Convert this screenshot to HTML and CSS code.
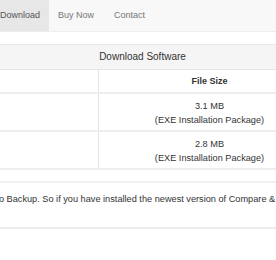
FILE: index.html
```html
<!DOCTYPE html>
<html>
<head>
<meta charset="utf-8">
<link rel="stylesheet" href="styles.css">
</head>
<body>
<div class="page">
  <nav class="navbar">
    <ul class="nav">
      <li class="active"><a href="#">Download</a></li>
      <li><a href="#">Buy Now</a></li>
      <li><a href="#">Contact</a></li>
    </ul>
  </nav>
  <div class="panel">
    <div class="panel-heading">Download Software</div>
    <table class="dl-table">
      <thead>
        <tr><th class="col-name"></th><th class="col-size">File Size</th></tr>
      </thead>
      <tbody>
        <tr><td class="col-name"></td><td class="col-size">3.1 MB<br>(EXE Installation Package)</td></tr>
        <tr><td class="col-name"></td><td class="col-size">2.8 MB<br>(EXE Installation Package)</td></tr>
      </tbody>
    </table>
  </div>
  <div class="note">
    <p>Compare to Backup. So if you have installed the newest version of Compare &amp; Backup, you do not need it.</p>
  </div>
</div>
</body>
</html>
```
FILE: styles.css
```css
html, body {
  margin: 0;
  padding: 0;
  background: #fff;
  overflow: hidden;
}
body {
  font-family: "Liberation Sans", Arial, sans-serif;
  color: #333;
}
.page {
  margin-left: -35px;
  width: 355px;
}
.navbar {
  background: #f8f8f8;
  border-bottom: 1px solid #eeeeee;
  height: 31px;
}
.nav {
  list-style: none;
  margin: 0;
  padding: 0 0 0 25px;
  display: flex;
  height: 31px;
}
.nav li a {
  display: block;
  height: 31px;
  line-height: 31px;
  padding: 0 10px;
  font-size: 9px;
  color: #777;
  text-decoration: none;
}
.nav li.active a {
  background: #e7e7e7;
  color: #555;
  padding-right: 9px;
}
.nav li.active + li a {
  padding-left: 9px;
}
.panel {
  margin-top: 12px;
  border-top: 1px solid #eaeaea;
}
.panel-heading {
  background: #f5f5f5;
  height: 24px;
  line-height: 24px;
  text-align: center;
  font-size: 10px;
  border-bottom: 1px solid #e6e6e6;
}
.dl-table {
  width: 100%;
  border-collapse: collapse;
  font-size: 9.2px;
}
.dl-table th, .dl-table td {
  text-align: center;
  vertical-align: middle;
  border-bottom: 2px solid #eeeeee;
}
.dl-table th {
  font-weight: bold;
  font-size: 9px;
  height: 22px;
  padding: 0;
}
.dl-table td {
  padding: 5px 0 3px;
  line-height: 14px;
  height: 27px;
}
.col-name {
  width: 133px;
  border-right: 1px solid #e3e3e3;
}
.note {
  margin-top: 11px;
  border-top: 2px solid #f0f0f0;
  border-bottom: 2px solid #ececec;
  padding: 10px 0 0;
  height: 34px;
}
.note p {
  margin: 0;
  font-size: 9.2px;
  line-height: 12px;
  white-space: nowrap;
  margin-left: -9px;
  color: #333;
}
```
